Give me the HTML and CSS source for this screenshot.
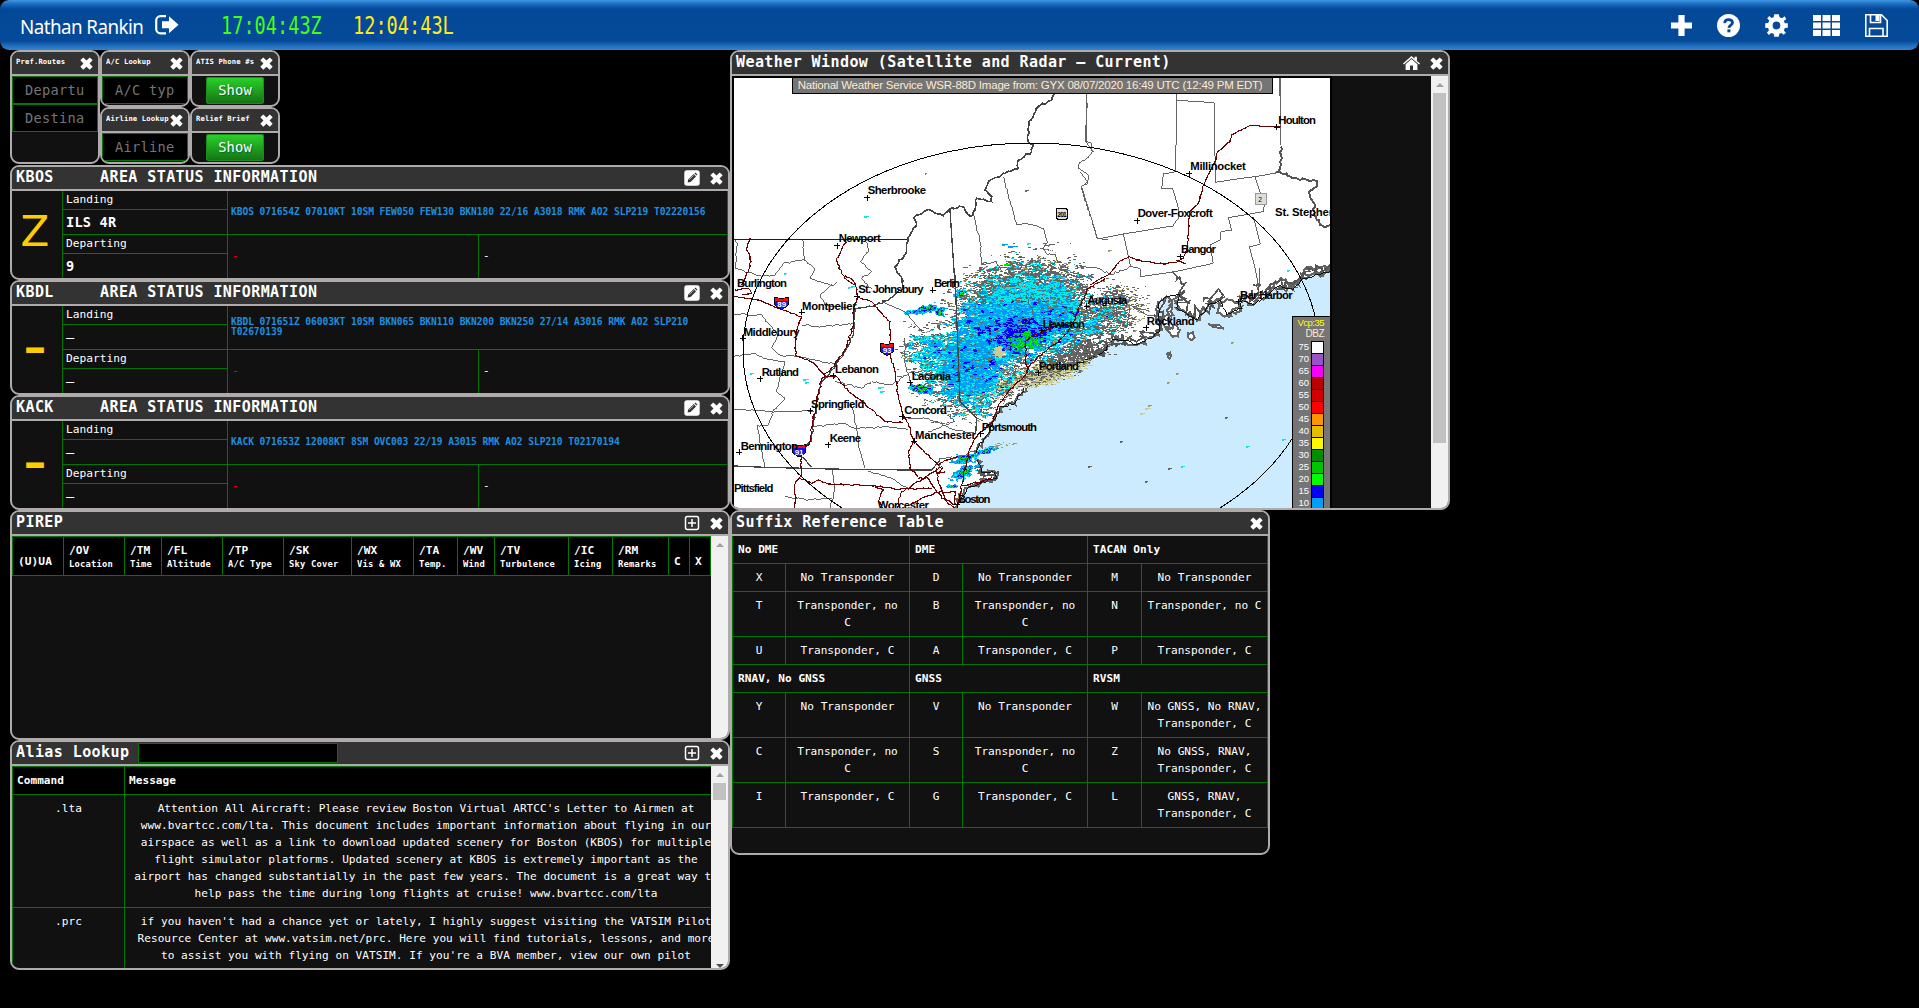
FILE: index.html
```html
<!DOCTYPE html>
<html lang="en">
<head>
<meta charset="utf-8">
<title>Controller Information Display</title>
<link rel="stylesheet" href="styles.css">
</head>
<body>
<svg class="defs" width="0" height="0">
  <symbol id="i-close" viewBox="0 0 12 12"><path d="M3 0.4 6 3.2 9 0.4 11.7 3 8.8 6 11.7 9 9 11.7 6 8.9 3 11.7 0.3 9 3.2 6 0.3 3z"/></symbol>
  <symbol id="i-edit" viewBox="0 0 16 16"><rect x="0.3" y="0.3" width="15.4" height="15.4" rx="2.6"/><path d="M3.6 12.5 4.2 9.6 9.7 4.1 12 6.4 6.5 11.9zM10.5 3.4 11.4 2.6 13.4 4.6 12.6 5.5z" fill="#333"/><path d="M5.3 9.7 9.8 5.3" stroke="#fff" stroke-width=".6"/></symbol>
  <symbol id="i-plus" viewBox="0 0 16 16"><rect x="1.5" y="1.5" width="13" height="13" rx="2" fill="none" stroke="#fff" stroke-width="1.5"/><path d="M8 4v8M4 8h8" stroke="#fff" stroke-width="1.5"/></symbol>
  <symbol id="i-home" viewBox="0 0 17 14"><path d="M8.5 0 11.6 2.8V.8h2.3v4.1L17 7.6l-.9 1L8.5 2 .9 8.6 0 7.6z"/><path d="M8.5 3.1 14.4 8.3V14H10V9.6H7V14H2.6V8.3z"/></symbol>
</svg>

<header class="topbar">
  <div class="user">Nathan Rankin</div>
  <svg class="logout" viewBox="0 0 24 20"><path d="M11 1.2H5.5A4.3 4.3 0 0 0 1.2 5.500V14a4.300 4.300 0 0 0 4.300 4.300H11" fill="none" stroke="#fff" stroke-width="2.200"/><path d="M7 6.200h7V1.200L23.500 9.700 14 18.200V13.300H7z" fill="#fff"/></svg>
  <div class="clock zulu">17:04:43Z</div>
  <div class="clock local">12:04:43L</div>
  <nav class="tools">
    <svg width="21" height="21" viewBox="0 0 21 21"><path d="M7.400 0h6.200v7.400H21v6H13.600V21H7.400V13.400H0V7.400H7.400z"/></svg>
    <svg width="23" height="23" viewBox="0 0 23 23"><circle cx="11.500" cy="11.500" r="11.500"/><path d="M7.800 9.200C7.600 6.600 9.400 5.600 11.500 5.600c2.200 0 4 1.200 4 3.200 0 2.400-3.300 2.400-3.600 5" fill="none" stroke="#064a99" stroke-width="2.800"/><rect x="10.400" y="15.300" width="3" height="3" fill="#064a99"/></svg>
    <svg width="23" height="23" viewBox="-11.500 -11.500 23 23"><path d="M-2.300-11.300H2.300L3-8.300 5.600-7.200 8.100-9.200 9.800-6.300 7.400-4.800 8.300-2.200 11.300-2.300V2.300L8.300 2.400 7.400 5.200 9.500 7.300 7 9.300 5 7.600 2.800 8.300 2.300 11.300H-2.300L-2.800 8.300-5.200 7.400-7.700 9.500-9.600 7-7.600 5-8.300 2.400-11.300 2.300V-2.300L-8.300-2.400-7.300-5-9.300-7.300-7.200-9.500-5-7.400-2.800-8.300z"/><circle r="3.900" fill="#064a99"/></svg>
    <svg width="27" height="21" viewBox="0 0 27 21"><path d="M0 0h8v6H0zM9.500 0h8v6h-8zM19 0h8v6h-8zM0 7.500h8v6H0zM9.500 7.500h8v6h-8zM19 7.500h8v6h-8zM0 15h8v6H0zM9.500 15h8v6h-8zM19 15h8v6h-8z"/></svg>
    <svg width="23" height="23" viewBox="0 0 23 23"><g fill="none" stroke="#fff" stroke-width="1.600"><path d="M.800.800H16.500L22.200 6.500V22.200H.800z"/><path d="M5.500 1V8.500H15.500V1M4.500 22V14.500H18V22"/></g><rect x="10.500" y="1" width="4" height="6"/></svg>
  </nav>
</header>

<main class="desktop">
  <section class="win w-routes small">
    <div class="bar"><span>Pref.Routes</span><svg class="x"><use href="#i-close"/></svg></div>
    <input class="field" placeholder="Departure"><input class="field" placeholder="Destination">
  </section>
  <section class="win w-ac small">
    <div class="bar"><span>A/C Lookup</span><svg class="x"><use href="#i-close"/></svg></div>
    <input class="field" placeholder="A/C type">
  </section>
  <section class="win w-airline small">
    <div class="bar"><span>Airline Lookup</span><svg class="x"><use href="#i-close"/></svg></div>
    <input class="field" placeholder="Airline">
  </section>
  <section class="win w-atis small">
    <div class="bar"><span>ATIS Phone #s</span><svg class="x"><use href="#i-close"/></svg></div>
    <button class="show">Show</button>
  </section>
  <section class="win w-relief small">
    <div class="bar"><span>Relief Brief</span><svg class="x"><use href="#i-close"/></svg></div>
    <button class="show">Show</button>
  </section>

  <section class="win status w-kbos">
    <div class="bar"><span class="apt">KBOS</span><span>AREA STATUS INFORMATION</span><svg class="e"><use href="#i-edit"/></svg><svg class="x"><use href="#i-close"/></svg></div>
    <div class="sgrid">
      <div class="atis">Z</div>
      <div class="rw"><p>Landing</p><p class="v">ILS 4R</p><p>Departing</p><p class="v">9</p></div>
      <div class="metar">KBOS 071654Z 07010KT 10SM FEW050 FEW130 BKN180 22/16 A3018 RMK AO2 SLP219 T02220156</div>
      <div class="note red">-</div><div class="note">-</div>
    </div>
  </section>
  <section class="win status w-kbdl">
    <div class="bar"><span class="apt">KBDL</span><span>AREA STATUS INFORMATION</span><svg class="e"><use href="#i-edit"/></svg><svg class="x"><use href="#i-close"/></svg></div>
    <div class="sgrid">
      <div class="atis none">–</div>
      <div class="rw"><p>Landing</p><p class="v none">–</p><p>Departing</p><p class="v none">–</p></div>
      <div class="metar">KBDL 071651Z 06003KT 10SM BKN065 BKN110 BKN200 BKN250 27/14 A3016 RMK AO2 SLP210<br>T02670139</div>
      <div class="note red">-</div><div class="note">-</div>
    </div>
  </section>
  <section class="win status w-kack">
    <div class="bar"><span class="apt">KACK</span><span>AREA STATUS INFORMATION</span><svg class="e"><use href="#i-edit"/></svg><svg class="x"><use href="#i-close"/></svg></div>
    <div class="sgrid">
      <div class="atis none">–</div>
      <div class="rw"><p>Landing</p><p class="v none">–</p><p>Departing</p><p class="v none">–</p></div>
      <div class="metar">KACK 071653Z 12008KT 8SM OVC003 22/19 A3015 RMK AO2 SLP210 T02170194</div>
      <div class="note red">-</div><div class="note">-</div>
    </div>
  </section>

  <section class="win w-pirep">
    <div class="bar"><span>PIREP</span><svg class="e"><use href="#i-plus"/></svg><svg class="x"><use href="#i-close"/></svg></div>
    <div class="scroller">
      <div class="view">
        <div class="phead">
          <div class="one">(U)UA</div><div>/OV<small>Location</small></div><div>/TM<small>Time</small></div><div>/FL<small>Altitude</small></div><div>/TP<small>A/C Type</small></div><div>/SK<small>Sky Cover</small></div><div>/WX<small>Vis &amp; WX</small></div><div>/TA<small>Temp.</small></div><div>/WV<small>Wind</small></div><div>/TV<small>Turbulence</small></div><div>/IC<small>Icing</small></div><div>/RM<small>Remarks</small></div><div class="one">C</div><div class="one">X</div>
        </div>
      </div>
      <div class="sb"><i class="up"></i></div>
    </div>
  </section>

  <section class="win w-alias">
    <div class="bar"><span>Alias Lookup</span><input class="search"><svg class="e"><use href="#i-plus"/></svg><svg class="x"><use href="#i-close"/></svg></div>
    <div class="scroller">
      <div class="view">
        <div class="alias">
          <div class="h">Command</div><div class="h">Message</div>
          <div>.lta</div><div>Attention All Aircraft: Please review Boston Virtual ARTCC's Letter to Airmen at<br>www.bvartcc.com/lta. This document includes important information about flying in our<br>airspace as well as a link to download updated scenery for Boston (KBOS) for multiple<br>flight simulator platforms. Updated scenery at KBOS is extremely important as the<br>airport has changed substantially in the past few years. The document is a great way to<br>help pass the time during long flights at cruise! www.bvartcc.com/lta</div>
          <div>.prc</div><div>if you haven't had a chance yet or lately, I highly suggest visiting the VATSIM Pilot<br>Resource Center at www.vatsim.net/prc. Here you will find tutorials, lessons, and more<br>to assist you with flying on VATSIM. If you're a BVA member, view our own pilot<br>http://forum.bvartcc.com/bva_portal/pilot/reference/</div>
        </div>
      </div>
      <div class="sb"><i class="up"></i><b class="thumb t-alias"></b><i class="down"></i></div>
    </div>
  </section>

  <section class="win w-wx">
    <div class="bar"><span>Weather Window (Satellite and Radar – Current)</span><svg class="e home"><use href="#i-home"/></svg><svg class="x"><use href="#i-close"/></svg></div>
    <div class="scroller">
      <div class="view radar">
<svg class="map" width="596" height="430" viewBox="734 78 596 430" shape-rendering="crispEdges">
  <rect x="734" y="78" width="596" height="430" fill="#fff"/>
  <g transform="translate(890 240) scale(.33333)">
    <polygon data-rough="12" fill="#ccebff" stroke="#646464" stroke-width="6" points="190,830 205,790 215,760 240,740 320,715 310,695 275,700 262,660 258,635 280,600 300,575 330,500 375,490 405,440 445,430 447,395 500,385 560,370 600,355 650,330 665,300 700,300 740,315 790,290 810,270 805,190 830,170 850,178 870,165 860,205 920,240 955,195 990,180 1010,225 1055,205 1050,175 1090,195 1130,165 1170,135 1210,150 1240,115 1340,85 1340,830"/>
    <g fill="#fff" stroke="#646464" stroke-width="6">
      <polygon data-rough="12" points="830,210 845,190 838,250 825,260"/><polygon data-rough="12" points="835,260 870,270 865,290 840,280"/><polygon data-rough="7" points="895,280 912,275 908,297 896,295"/><polygon data-rough="7" points="955,250 985,255 1003,266"/>
      <polygon data-rough="11" points="985,190 1025,180 1055,200 1015,230 990,220"/><polygon data-rough="12" points="1150,140 1180,120 1215,140 1190,150"/><polygon data-rough="12" points="1230,100 1260,80 1320,75 1310,95 1250,105"/><polygon data-rough="6" points="832,340 840,338 838,355"/>
    </g>
    <g fill="none" stroke="#555" stroke-width="5">
      <polyline data-rough="20" points="560,365 575,290 590,350 600,300 620,340 630,280 650,320 665,290 700,290 690,310 650,330 600,350"/>
      <polyline data-rough="20" points="450,378 490,350 520,365 545,330 560,360 585,335 600,360 640,335 660,300"/>
      <polyline data-rough="22" points="700,300 740,305 760,290 800,275 805,230 820,190"/>
      <polyline data-rough="16" points="850,100 860,120 885,130 870,170 900,180"/><polyline data-rough="10" points="1090,135 1110,135 1108,165 1088,180 1085,150"/>
      <polyline data-rough="22" points="860,190 900,215 945,215 960,190 975,160 1005,170"/>
      <polyline data-rough="20" points="1040,170 1080,175 1120,160 1150,130 1190,135 1215,120 1245,100 1320,80"/>
      <polyline data-rough="12" points="260,690 280,710 325,700 315,720 230,735"/>
      <polyline data-rough="12" points="940,185 960,175 975,205"/>
    </g>
    <polyline data-rough="5" fill="none" stroke="#111" stroke-width="3" points="205,790 240,740 320,715 310,695 275,700 262,660 258,635 280,600 300,575 330,500 375,490 405,440 445,430 447,395 500,385 560,370 600,355 650,330 665,300 700,300 740,315 790,290 810,270 805,190 830,170 870,165 860,205 920,240 955,195 990,180 1010,225 1055,205 1050,175 1090,195 1130,165 1170,135 1210,150 1240,115 1320,95"/>
  </g>
  <g id="echoes"></g>
  <g fill="none" stroke="#646464" stroke-width="3">
    <g transform="translate(725 45) scale(.33333)">
      <polyline data-rough="2" points="1085,147 1085,290 1100,295 1100,325 1085,340 1065,352 1060,370 1090,390 1088,415 1068,425 1117,580 1150,582"/>
      <polyline data-rough="2" points="835,395 875,540 905,535 955,550 968,590 955,610 965,628 990,628 1000,655"/>
      <polyline data-rough="3" points="745,510 765,590 770,660 815,650 830,680"/>
      <polyline data-rough="3" points="233,585 238,645 175,655 150,690 110,695 30,670"/><polyline data-rough="3" points="30,585 38,600 30,670"/>
      <polyline data-rough="3" points="238,645 270,670 255,700 320,720"/><polyline data-rough="4" points="425,590 430,620 405,650 440,680 410,700 440,730"/>
    </g>
    <g transform="translate(1080 45) scale(.33333)">
      <polyline points="20,147 17,290 40,320"/><polyline points="290,147 287,380"/><polyline points="290,166 403,173 406,412 470,402 525,395 600,382"/>
      <polyline points="287,380 250,387 245,432 278,430 297,495 295,520 278,543 130,567 53,582 5,425 22,410 0,380"/>
      <polyline points="130,567 152,665 180,670 182,695 285,680 400,655 390,600 420,585 422,560 455,555 445,518 550,500 553,480 525,395"/>
      <polyline points="520,515 541,597 508,606 523,660 535,720"/><polyline data-rough="4" points="0,665 60,672 95,690 152,665"/>
    </g>
    <g transform="translate(725 275) scale(.33333)">
      <polyline data-rough="3" points="27,118 110,120 135,150 160,180 140,220 165,240 225,245 230,248 335,268"/><polyline data-rough="3" points="230,150 290,155 385,145"/><polyline data-rough="3" points="335,20 285,60 300,90 370,100"/>
      <polyline data-rough="3" points="27,245 90,235 115,250 180,260 155,350 180,370 145,405"/><polyline data-rough="3" points="27,402 140,410 268,408"/><polyline data-rough="3" points="145,405 130,450 97,452 120,575"/>
      <polyline data-rough="4" points="330,320 410,340 440,320 500,330 560,290"/><polyline data-rough="3" points="260,455 350,445 390,460 490,455 550,465"/><polyline data-rough="3" points="380,390 400,500 418,580"/>
      <polyline data-rough="3" points="550,430 610,430 690,465 750,475"/><polyline data-rough="3" points="660,410 690,440 610,470"/><polyline data-rough="3" points="540,190 540,265 560,330"/>
      <polyline data-rough="3" points="320,580 330,640 315,700"/><polyline data-rough="3" points="180,665 250,675 320,670"/><polyline data-rough="3" points="430,590 500,610 550,640"/><polyline data-rough="3" points="705,260 800,250 840,300 880,290"/><polyline data-rough="3" points="905,60 925,120 880,170"/>
      <polyline data-rough="5" points="640,580 645,550 690,550 750,530"/><polyline points="470,80 540,110 590,170"/>
    </g>
    <g transform="translate(1080 275) scale(.33333)"><polyline points="150,90 200,120 235,125"/><polyline points="130,40 120,70 150,95 140,160"/><polyline points="540,-20 538,30"/></g>
  </g>
  <g fill="none" stroke="#202020" stroke-width="4">
    <g transform="translate(725 45) scale(.33333)" >
      <polyline points="27,583 548,583"/>
      <polyline data-rough="4" stroke="#444" stroke-width="5" points="988,147 980,165 940,185 925,215 912,230 910,290 925,300 920,320 880,345 880,370 835,385 790,410 780,435 800,455 800,470 755,460 750,495 738,515 712,485 675,492 655,512 610,493 567,517 575,540 555,570 548,583 545,620 510,665 535,710"/>
      <polyline stroke="#444" points="675,495 690,720"/>
    </g>
    <g transform="translate(1080 45) scale(.33333)"><polyline stroke="#666" points="600,99 602,300"/><polyline data-rough="7" stroke="#555" stroke-width="6" points="602,305 605,340 593,380 620,385 650,400 700,405 712,415 688,440 705,480 700,510 735,547 750,540"/></g>
    <g transform="translate(725 275) scale(.33333)" stroke="#444">
      <polyline data-rough="4" points="530,10 535,40 490,75 440,95 390,100 385,170 365,220 330,275 290,320 275,380 260,490 245,510"/><polyline points="232,545 260,577"/>
      <polyline points="27,573 120,577 400,584 620,585 645,555"/><polyline points="690,0 705,380 755,430 752,475"/>
    </g>
  </g>
  <g fill="none" stroke="#6b0000" stroke-width="3.500">
    <g transform="translate(725 45) scale(.33333)"><polyline data-rough="3" points="75,580 65,610 78,650 70,680 50,720"/><polyline data-rough="3" points="365,590 335,640 342,670 360,700 388,720"/></g>
    <g transform="translate(1080 45) scale(.33333)"><polyline data-rough="2" points="603,245 510,242 455,270 450,290 412,320 405,350 370,420 355,475 330,500 325,560 322,610 310,640 290,652 250,657 170,645 148,635 120,648 90,685 30,720"/><polyline points="290,645 318,657"/></g>
    <g transform="translate(725 275) scale(.33333)">
      <polyline data-rough="3" points="28,65 100,75 160,100 190,110 230,125 213,170 212,240 262,262 300,303 335,305 370,350 420,385 480,440 535,443"/><polyline data-rough="3" points="30,45 70,40 80,55 50,60"/>
      <polyline data-rough="4" points="360,0 390,25 400,65 385,105 385,150 365,215 325,275 290,310 275,380 262,450 255,500 228,540 230,600 212,620 210,700"/>
      <polyline data-rough="3" points="400,65 440,80 460,105 495,140 495,240 510,290 520,370 535,425 550,445 565,500 550,530 555,580 580,605"/><polyline points="535,430 557,427"/>
      <polyline data-rough="3" points="565,500 640,570 665,555 700,545"/><polyline data-rough="3" points="225,610 260,625 280,615 310,627 450,632 520,643 620,640"/><polyline data-rough="3" points="450,635 475,645 460,680 475,700"/><polyline data-rough="3" points="650,575 590,615 530,650 515,700"/><polyline data-rough="3" points="580,610 610,610 635,650 665,680 690,698"/><polyline data-rough="3" points="635,580 640,620 660,670 690,690"/><polyline data-rough="3" points="555,690 600,665 640,652 690,650 690,690"/>
      <polyline data-rough="3" points="700,690 710,630 725,560 735,520 760,475 800,445 820,390 850,350 905,295 915,270 960,230 1000,200 1040,155 1070,80 1090,40 1140,10"/>
      <polyline data-rough="3" points="905,290 900,200 920,185 960,170 1000,150 1040,150"/><polyline data-rough="3" points="710,632 770,620 800,608"/><polyline data-rough="3" points="655,575 640,595 660,590"/>
    </g>
  </g>
  <ellipse cx="1031" cy="351" rx="288" ry="208" fill="none" stroke="#000"/>
  <circle cx="1031.500" cy="351" r="2.500" fill="#fff"/>

  <g class="shield" transform="translate(725 275) scale(.33333)" font-size="24">
    <g transform="translate(170 85)"><path d="M-20-18 0-14 20-18V6L0 20-20 6z" fill="#11f" stroke="#000" stroke-width="3"/><path d="M-19-17 0-13 19-17V-8H-19z" fill="#e11"/><text x="-13" y="12">89</text></g>
    <g transform="translate(486 223)"><path d="M-20-18 0-14 20-18V6L0 20-20 6z" fill="#11f" stroke="#000" stroke-width="3"/><path d="M-19-17 0-13 19-17V-8H-19z" fill="#e11"/><text x="-13" y="12">93</text></g>
    <g transform="translate(222 527)"><path d="M-20-18 0-14 20-18V6L0 20-20 6z" fill="#11f" stroke="#000" stroke-width="3"/><path d="M-19-17 0-13 19-17V-8H-19z" fill="#e11"/><text x="-13" y="12">91</text></g>
  </g>
  <g transform="translate(725 45) scale(.33333)"><rect x="994" y="490" width="33" height="33" rx="5" fill="#ddd" stroke="#000" stroke-width="4"/><text x="997" y="515" font-size="20" font-weight="bold" textLength="28">201</text></g>
  <g transform="translate(1080 45) scale(.33333)"><rect x="526" y="446" width="34" height="34" fill="#ddd" stroke="#999" stroke-width="3"/><text x="535" y="470" font-size="20">2</text></g>

  <g class="places" font-size="34">
    <g transform="translate(725 45) scale(.33333)"><text x="428" y="446" textLength="175">Sherbrooke</text><text x="341" y="591" textLength="126">Newport</text><path d="M418 458h18M427 449v18M328 602h18M337 593v18"/></g>
    <g transform="translate(1080 45) scale(.33333)"><text x="595" y="237" textLength="113">Houlton</text><text x="331" y="375" textLength="166">Millinocket</text><text x="173" y="516" textLength="225">Dover-Foxcroft</text><text x="303" y="624" textLength="105">Bangor</text><text x="585" y="513" textLength="182">St. Stephen</text><path d="M581 247h18M590 238v18M319 386h18M328 377v18M163 527h18M172 518v18M292 635h18M301 626v18"/></g>
    <g transform="translate(725 275) scale(.33333)">
      <text x="36" y="36" textLength="150">Burlington</text><text x="627" y="36" textLength="78">Berlin</text><text x="400" y="54" textLength="196">St. Johnsbury</text><text x="231" y="104" textLength="164">Montpelier</text><text x="56" y="183" textLength="168">Middlebury</text><text x="110" y="303" textLength="112">Rutland</text><text x="330" y="294" textLength="132">Lebanon</text><text x="560" y="315" textLength="118">Laconia</text><text x="258" y="399" textLength="160">Springfield</text><text x="538" y="417" textLength="128">Concord</text><text x="314" y="500" textLength="94">Keene</text><text x="570" y="492" textLength="183">Manchester</text><text x="47" y="524" textLength="172">Bennington</text><text x="770" y="468" textLength="166">Portsmouth</text><text x="27" y="651" textLength="118">Pittsfield</text><text x="698" y="684" textLength="98">Boston</text><text x="458" y="703" textLength="154">Worcester</text><text x="942" y="284" textLength="120">Portland</text><text x="953" y="159" textLength="127">Lewiston</text>
      <path d="M615 46h18M624 37v18M388 65h18M397 56v18M221 112h18M230 103v18M44 190h18M53 181v18M97 311h18M106 302v18M316 302h18M325 293v18M547 323h18M556 314v18M247 407h18M256 398v18M523 425h18M532 416v18M301 509h18M310 500v18M559 499h18M568 490v18M34 532h18M43 523v18M759 476h18M768 467v18M688 690h18M697 681v18M931 293h18M940 284v18M942 166h18M951 157v18"/>
    </g>
    <g transform="translate(1080 275) scale(.33333)"><text x="22" y="87" textLength="120">Augusta</text><text x="200" y="150" textLength="144">Rockland</text><text x="480" y="73" textLength="158">Bar Harbor</text><path d="M11 94h18M20 85v18M190 158h18M199 149v18M468 80h18M477 71v18"/></g>
  </g>
  <rect x="792.500" y="77.500" width="480" height="16" fill="#757575" stroke="#000"/>
  <text x="797.700" y="89" font-size="11.500" fill="#ffe9d0" textLength="465">National Weather Service WSR-88D Image from: GYX 08/07/2020 16:49 UTC (12:49 PM EDT)</text>
  <rect x="1292.500" y="316.500" width="40" height="200" fill="#757575" stroke="#000"/>
  <text x="1297.500" y="326" font-size="9.500" fill="#ff0" textLength="27">Vcp:35</text>
  <text x="1305.500" y="337" font-size="10" fill="#ffe9d0" textLength="19">DBZ</text>
  <g id="scale" font-size="9.500" fill="#fff"></g>
</svg>
      </div>
      <div class="sb"><i class="up"></i><b class="thumb t-wx"></b></div>
    </div>
  </section>

  <section class="win w-suffix">
    <div class="bar"><span>Suffix Reference Table</span><svg class="x"><use href="#i-close"/></svg></div>
    <div class="suffix">
      <b>No DME</b><b>DME</b><b>TACAN Only</b>
      <i>X</i><i>No Transponder</i><i>D</i><i>No Transponder</i><i>M</i><i>No Transponder</i>
      <i>T</i><i>Transponder, no<br>C</i><i>B</i><i>Transponder, no<br>C</i><i>N</i><i>Transponder, no C</i>
      <i>U</i><i>Transponder, C</i><i>A</i><i>Transponder, C</i><i>P</i><i>Transponder, C</i>
      <b>RNAV, No GNSS</b><b>GNSS</b><b>RVSM</b>
      <i>Y</i><i>No Transponder</i><i>V</i><i>No Transponder</i><i>W</i><i>No GNSS, No RNAV,<br>Transponder, C</i>
      <i>C</i><i>Transponder, no<br>C</i><i>S</i><i>Transponder, no<br>C</i><i>Z</i><i>No GNSS, RNAV,<br>Transponder, C</i>
      <i>I</i><i>Transponder, C</i><i>G</i><i>Transponder, C</i><i>L</i><i>GNSS, RNAV,<br>Transponder, C</i>
    </div>
  </section>
</main>
<script src="map.js"></script>
</body>
</html>
```
FILE: styles.css
```css
* { box-sizing: border-box; }
body { margin: 0; background: #000; color: #fff; width: 1919px; height: 1008px; overflow: hidden; position: relative; font-family: "DejaVu Sans Mono", "Liberation Mono", monospace; font-size: 11.1px; letter-spacing: .03px; }
p { margin: 0; }
.defs { position: absolute; }

.topbar { height: 50px; border-radius: 9px; display: flex; align-items: center; padding: 0 31px 0 20px; background: linear-gradient(#3c98e4 0, #1c6cbd 4px, #044999 9px, #054a98 41px, #1c68b7 45px, #3585d2 50px); }
.user { width: 124px; font: 20.2px "Noto Sans", "Open Sans", sans-serif; letter-spacing: -.6px; white-space: nowrap; padding-top: 1px; transform: scaleX(.93); transform-origin: 0 50%; }
.logout { width: 24px; height: 20px; margin-left: 11px; }
.clock { font-size: 24px; font-family: "DejaVu Sans Mono", monospace; letter-spacing: 0; width: 132px; flex: none; transform: scaleX(.775); transform-origin: 0 50%; padding-top: 2px; }
.zulu { color: #4f1; margin-left: 42px; }
.local { color: #ffe81a; }
.tools { margin-left: auto; display: flex; align-items: center; fill: #fff; gap: 25px; }
.tools svg { display: block; }

.win { position: absolute; background: #111; border: 2px solid #b0abab; border-radius: 9px; overflow: hidden; }
.bar { height: 24px; background: #333; border-bottom: 2px solid #b0abab; display: flex; align-items: center; padding: 0 5px 0 4px; font-size: 15px; font-weight: bold; letter-spacing: .42px; line-height: 21px; white-space: nowrap; }
.bar > span { height: 22px; }
.bar > .apt { width: 84px; }
.bar .x { width: 13px; height: 13px; fill: #fff; margin-left: auto; margin-top: 1px; flex: none; }
.bar .e { width: 16px; height: 16px; fill: #fff; margin-left: auto; flex: none; }
.bar .e + .x { margin-left: 10px; }
.bar .home { width: 17px; height: 14px; }

.w-routes { left: 10px; top: 50px; width: 90px; height: 114px; }
.w-ac { left: 100px; top: 50px; width: 90px; height: 57px; }
.w-airline { left: 100px; top: 107px; width: 90px; height: 57px; }
.w-atis { left: 190px; top: 50px; width: 90px; height: 57px; }
.w-relief { left: 190px; top: 107px; width: 90px; height: 57px; }
.w-kbos { left: 10px; top: 165px; width: 720px; height: 115px; }
.w-kbdl { left: 10px; top: 280px; width: 720px; height: 115px; }
.w-kack { left: 10px; top: 395px; width: 720px; height: 115px; }
.w-pirep { left: 10px; top: 510px; width: 720px; height: 230px; }
.w-alias { left: 10px; top: 740px; width: 720px; height: 230px; }
.w-wx { left: 730px; top: 50px; width: 720px; height: 460px; }
.w-suffix { left: 730px; top: 510px; width: 540px; height: 345px; }

.small .bar { font-size: 7.2px; letter-spacing: .15px; padding: 0 5px 0 4px; line-height: 20px; }
.field { display: block; width: 86px; height: 28px; margin: 0; background: #000; color: #fff; border: 1px solid #007800; padding: 0 12px 1px; font: 13.6px "DejaVu Sans Mono", monospace; letter-spacing: .3px; outline: 0; }
.field::placeholder { color: #757575; }
.show { display: block; width: 58px; height: 27px; margin: 1px auto 0; border: 0; border-radius: 3px; background: linear-gradient(#2ad42a, #147014); color: #fff; font: 13.8px "DejaVu Sans Mono", monospace; letter-spacing: .1px; padding: 0 0 2px; box-shadow: inset 0 0 0 1px #1b8f1b; text-shadow: 1px 1px 1px #063; }

.sgrid { display: grid; width: 716px; grid-template-columns: 50px 166px 250px 250px; grid-template-rows: 44px 43px; border-right: 1px solid #007800; }
.atis { grid-row: 1 / 3; color: #fc0; font: 42px/81px "DejaVu Sans", sans-serif; letter-spacing: 0; text-align: center; padding-right: 4px; }
.atis.none { font-weight: bold; font-size: 45px; }
.rw { grid-row: 1 / 3; border: solid #007800; border-width: 0 1px; display: grid; grid-template-rows: 19px 25px 19px 24px; }
.rw p { padding-left: 3px; line-height: 18px; border-bottom: 1px solid #007800; font-size: 11.2px; letter-spacing: .03px; }
.rw p:last-child { border: 0; }
.rw .v { font-size: 13.6px; font-weight: bold; line-height: 25px; letter-spacing: .2px; }
.rw .v.none { font-weight: normal; line-height: 24px; }
.metar { grid-column: 3 / 5; border-bottom: 1px solid #007800; color: #1c90e0; font-size: 9.6px; font-weight: bold; line-height: 10px; letter-spacing: -.06px; padding: 0 0 2px 3px; display: flex; align-items: center; white-space: nowrap; }
.note { padding-left: 4px; line-height: 42px; font-size: 11px; border-left: 1px solid #007800; }
.note.red { color: #f00; border: 0; }

.scroller { display: flex; height: calc(100% - 24px); }
.view { flex: 1; min-width: 0; overflow: hidden; }
.sb { width: 17px; background: #f1f1f1; position: relative; flex: none; }
.sb i { position: absolute; left: 5px; border: 4px solid transparent; border-top-width: 0; }
.sb .up { top: 7px; border-bottom-color: #a0a0a0; }
.sb .down { top: 198px; border-width: 4px 4px 0; border-top-color: #505050; }
.thumb { position: absolute; left: 2px; width: 13px; background: #c1c1c1; }
.t-alias { top: 17px; height: 17px; }
.t-wx { top: 17px; height: 350px; }

.phead { display: grid; width: 699px; height: 40px; grid-template-columns: 51px 61px 37px 61px 61px 68px 62px 44px 37px 74px 44px 56px 21px 21px; background: #000; border: solid #007800; border-width: 1px 0 1px 1px; font-weight: bold; font-size: 11.2px; letter-spacing: .05px; }
.phead div { border-right: 1px solid #007800; padding: 6px 0 0 5px; line-height: 15px; white-space: nowrap; }
.phead small { display: block; font-size: 8.8px; letter-spacing: .2px; line-height: 13px; }
.phead .one { padding-top: 17px; }
.search { width: 200px; height: 20px; margin: 0 0 0 9px; background: #000; border: 1px solid #007800; padding: 0; }

.alias { display: grid; width: 716px; grid-template-columns: 112px 602px; border: solid #007800; border-width: 1px 0 0 1px; line-height: 17px; text-align: center; }
.alias div { border-bottom: 1px solid #007800; padding: 5px 0; white-space: nowrap; }
.alias div:nth-child(odd) { border-right: 1px solid #007800; }
.alias .h { background: #000; font-weight: bold; text-align: left; padding: 5px 4px; }
.alias div:nth-child(3), .alias div:nth-child(4) { height: 113px; }

.radar { background: #111; }
.map { display: block; border: 2px solid #000; border-bottom: 0; box-sizing: content-box; font-family: "Liberation Sans", Arial, sans-serif; letter-spacing: 0; }
.places text { font-weight: bold; }
.places path { stroke: #000; stroke-width: 3; }
.shield text { fill: #fff; font-weight: bold; }

.suffix { display: grid; grid-template-columns: 53px 124px 53px 125px 54px 126px; grid-template-rows: 28px 28px 45px 28px 28px 45px 45px 45px; line-height: 17px; text-align: center; border-left: 1px solid #007800; width: 536px; }
.suffix b, .suffix i { font-style: normal; padding: 5px 0 0; border: solid #007800; border-width: 0 1px 1px 0; white-space: nowrap; }
.suffix b { grid-column: span 2; text-align: left; padding-left: 5px; }
```
FILE: map.js
```js
// Seeded generator keeps the radar frame stable between loads.
let seed = 20200807;
const rnd = () => {
  seed = (seed * 1664525 + 1013904223) >>> 0;
  return seed / 4294967296;
};

// Break long coast and road segments into short irregular steps.
document.querySelectorAll('[data-rough]').forEach(el => {
  const amp = +el.dataset.rough;
  const pts = el.getAttribute('points').trim().split(/\s+/).map(p => p.split(',').map(Number));
  if (el.tagName === 'polygon') pts.push(pts[0]);
  const out = [pts[0]];
  for (let i = 1; i < pts.length; i++) {
    const [ax, ay] = pts[i - 1], [bx, by] = pts[i];
    const len = Math.hypot(bx - ax, by - ay);
    const n = len > 400 ? 1 : Math.max(1, Math.round(len / 8));
    for (let k = 1; k <= n; k++) {
      const j = k < n ? amp : 0;
      out.push([ax + (bx - ax) * k / n + (rnd() - .5) * j * 1.6, ay + (by - ay) * k / n + (rnd() - .5) * j * 1.6]);
    }
  }
  el.setAttribute('points', out.map(p => p.map(v => v.toFixed(1)).join(',')).join(' '));
});

// Smooth value noise, used to clump the echoes.
const lattice = Array.from({ length: 4096 }, rnd);
const at = (x, y) => lattice[((x & 63) + (y & 63) * 64)];
const noise = (x, y) => {
  const i = Math.floor(x), j = Math.floor(y), u = x - i, v = y - j;
  return (at(i, j) * (1 - u) + at(i + 1, j) * u) * (1 - v) + (at(i, j + 1) * (1 - u) + at(i + 1, j + 1) * u) * v;
};

const C = { sky: '#009ff4', cyan: '#00ecec', blue: '#0000f6', green: '#00f000', dgreen: '#00a800', gray: '#646464', olive: '#9c9c63', sand: '#cccc99', white: '#ffffff' };
const runs = {};
const put = (c, x, y, w) => { (runs[c] = runs[c] || []).push(`M${x} ${y}h${w}`); };

const core = [[60,320],[190,255],[215,170],[290,110],[380,75],[510,80],[570,130],[600,190],[680,180],[690,250],[600,290],[520,330],[430,365],[370,400],[330,455],[260,510],[190,505],[130,440],[90,370]];
const edgeDist = (px, py) => {
  let inside = false, best = 1e9;
  for (let i = 0, j = core.length - 1; i < core.length; j = i++) {
    const [ax, ay] = core[i], [bx, by] = core[j];
    if ((ay > py) !== (by > py) && px < (bx - ax) * (py - ay) / (by - ay) + ax) inside = !inside;
    const t = Math.max(0, Math.min(1, ((px - ax) * (bx - ax) + (py - ay) * (by - ay)) / ((bx - ax) ** 2 + (by - ay) ** 2)));
    best = Math.min(best, Math.hypot(px - ax - t * (bx - ax), py - ay - t * (by - ay)));
  }
  return inside ? best : -best;
};
const blob = (x, y, cx, cy, rx, ry, a) => {
  const c = Math.cos(a), s = Math.sin(a), dx = x - cx, dy = y - cy;
  return 1 - Math.hypot((dx * c + dy * s) / rx, (dy * c - dx * s) / ry);
};
const cells = [[290,632,32,11,-.3],[225,655,42,15,-.15],[220,697,45,17,-.5],[188,738,16,8,0],[110,205,36,14,-.2],[150,213,16,16,0],[215,160,28,14,-.4],[90,445,45,16,.2],[60,215,26,6,-.2]];

for (let py = 0; py < 262; py++) {
  for (let px = 0; px < 260; px++) {
    const x = px * 3, y = py * 3, X = 890 + px, Y = 240 + py + .5;
    const w = rnd() < .3 ? 3 : rnd() < .6 ? 2 : 1;
    const d = edgeDist(x, y) + (noise(x / 20, y / 9) - .5) * 95;
    const r = rnd();
    const fringe = y < 190 || x > 530;
    if (d > -50) {
      const north = y < 130 || x > 580;
      if (d > 38 && !(north && r < .3)) {
        const hot = blob(x, y, 390, 285, 110, 65, 0) + (noise(x / 9, y / 9) - .5) * 1.2;
        const hot2 = blob(x, y, 405, 308, 66, 38, 0) + (noise(x / 7 + 9, y / 7) - .5) * .9;
        const west = noise(x / 11 + 20, y / 8 + 7);
        if (blob(x, y, 325, 335, 17, 15, 0) + (noise(x / 5, y / 5) - .5) * .9 > 0) put('sand', X, Y, w);
        else if (hot2 > .3 && r < .5) put(r < .28 ? 'green' : 'dgreen', X, Y, 1);
        else if (hot > .35 && r < .45) put('blue', X, Y, w);
        else if (west > .76 && y > 180 && r < .4) put('blue', X, Y, w);
        else put(r < (fringe ? .4 : .14) ? 'cyan' : r > (fringe ? .9 : .975) ? 'gray' : 'sky', X, Y, w);
      } else if (d > 5) {
        put(r < .32 ? 'cyan' : r < .68 ? (fringe ? 'gray' : 'sky') : r < .78 ? 'gray' : r < .83 ? 'olive' : r < .92 ? 'white' : 'sky', X, Y, w);
      } else if (r < .3 + d / 160) {
        put(r < .11 ? 'gray' : r < .15 ? 'olive' : r < .2 ? 'cyan' : 'gray', X, Y, w);
      }
    }
    // ground clutter along the shore
    const shore = Math.max(blob(x, y, 470, 398, 150, 40, -.25), blob(x, y, 350, 432, 75, 30, -.7));
    if (shore > 0 && rnd() < shore * 1.5) put(rnd() < .72 ? 'sand' : rnd() < .5 ? 'olive' : 'gray', X, Y, w);
    if (blob(x, y, 540, 345, 115, 34, -.3) > rnd() * .7 && rnd() < .6) put('gray', X, Y, w);
    if (blob(x, y, 690, 200, 105, 80, 0) + (noise(x / 12, y / 8) - .5) * .6 > rnd() && rnd() < .3) put(rnd() < .4 ? 'olive' : 'gray', X, Y, w);
    if (blob(x, y, 330, 615, 60, 10, -.2) > rnd() && rnd() < .3) put('olive', X, Y, w);
    for (const [cx, cy, rx, ry, a] of cells) {
      const b = blob(x, y, cx, cy, rx, ry, a) + (noise(x / 8, y / 6) - .5) * 1;
      if (b > .1) put(b > .8 ? (rnd() < .6 ? 'green' : 'dgreen') : b > .5 && rnd() < .6 ? 'blue' : rnd() < .3 ? 'cyan' : 'sky', X, Y, 1);
    }
  }
}
// isolated returns
[['cyan',864,216,5],['sky',925,173,2],['cyan',784,273,3],['cyan',848,287,4],['cyan',851,286,4],['cyan',803,379,6],['cyan',805,382,4],['cyan',750,373,4],['cyan',878,387,6],['cyan',880,391,5],['cyan',1287,270,3],['cyan',1246,446,4],['cyan',1282,439,4],['cyan',1181,466,4],['gray',1168,468,4],['gray',1169,354,3],['gray',1225,417,3],['olive',1231,342,3],['sky',1008,246,10],['sky',1002,244,6],['cyan',1027,243,4],['olive',1108,250,4],['gray',1025,190,4],['sand',1145,408,6],['olive',1148,405,4],['sand',1140,413,5],['olive',1176,373,3],['olive',1167,382,3],['gray',1088,466,4],['gray',1145,481,3],['green',1004,264,6],['gray',1120,441,3]].forEach(([c, x, y, w]) => {
  put(c, x, y + .5, w); put(c, x, y + 1.5, Math.ceil(w / 2));
});

const ns = 'http://www.w3.org/2000/svg';
const add = (parent, tag, attrs, text) => {
  const el = document.createElementNS(ns, tag);
  for (const k in attrs) el.setAttribute(k, attrs[k]);
  if (text) el.textContent = text;
  parent.appendChild(el);
};
const echoes = document.getElementById('echoes');
for (const c of ['sky', 'sand', 'olive', 'cyan', 'gray', 'white', 'blue', 'dgreen', 'green']) {
  if (runs[c]) add(echoes, 'path', { d: runs[c].join(''), stroke: C[c], fill: 'none' });
}

// reflectivity legend
const scale = document.getElementById('scale');
['#fdfdfd', '#9854c6', '#f800fd', '#bc0000', '#d40000', '#fd0000', '#fd9500', '#e5bc00', '#fdf802', '#008e00', '#01c501', '#02fd02', '#0300f4', '#019ff4'].forEach((fill, i) => {
  add(scale, 'rect', { x: 1311.5, y: 341.5 + i * 12, width: 12, height: 12, fill, stroke: '#000' });
  add(scale, 'text', { x: 1298.5, y: 350 + i * 12 }, String(75 - i * 5));
});
```
